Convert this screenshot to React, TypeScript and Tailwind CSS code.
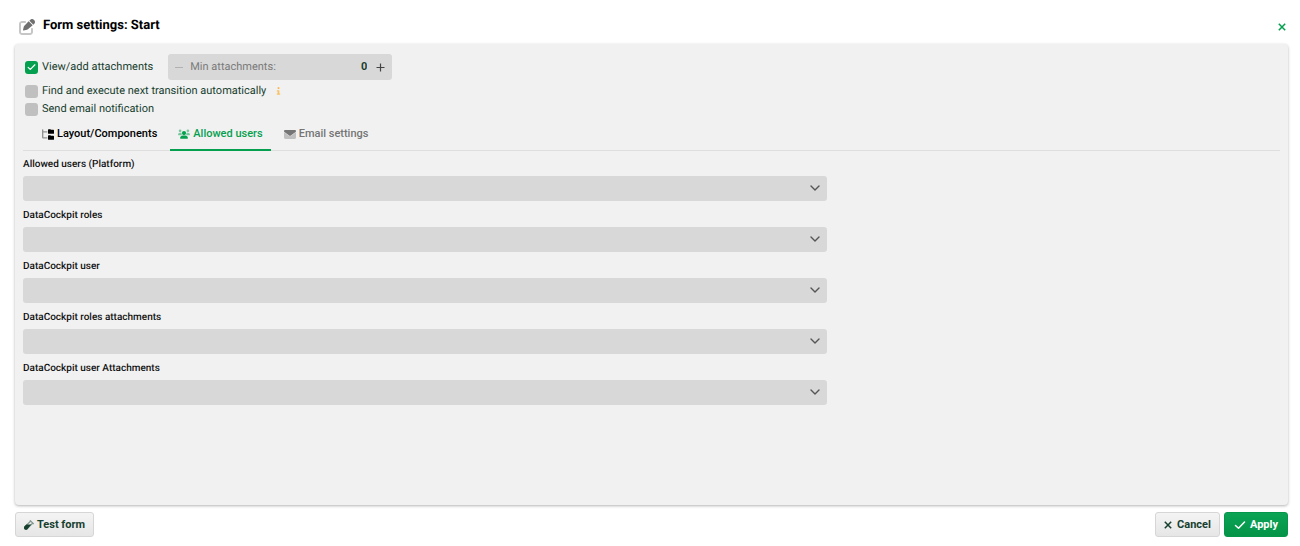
import React, { useState } from 'react';
import clsx from 'clsx';

type TabId = 'layout' | 'users' | 'email';

interface IconProps {
  className?: string;
}

function EditIcon({ className }: IconProps) {
  return (
    <svg viewBox="0 0 512 512" className={className} fill="currentColor" aria-hidden="true">
      <path
        opacity="0.4"
        d="M0 160v256c0 53 43 96 96 96h256c53 0 96-43 96-96v-96c0-18-14-32-32-32s-32 14-32 32v96c0 18-14 32-32 32H96c-18 0-32-14-32-32V160c0-18 14-32 32-32h96c18 0 32-14 32-32s-14-32-32-32H96C43 64 0 107 0 160z"
      />
      <path d="M472 22c-30-30-79-30-109 0l-31 31 127 127 31-31c30-30 30-79 0-109l-18-18zM309 75L172 212c-9 9-15 19-18 31l-26 107c-3 11 8 22 19 19l107-26c12-3 22-9 31-18l152-123L309 75z" />
    </svg>
  );
}

function TreeIcon({ className }: IconProps) {
  return (
    <svg viewBox="0 0 576 512" className={className} fill="currentColor" aria-hidden="true">
      <path
        opacity="0.4"
        d="M64 32C64 14 50 0 32 0S0 14 0 32v352c0 35 29 64 64 64h192v-64H64V160h192V96H64V32z"
      />
      <path d="M288 32v160c0 18 14 32 32 32h224c18 0 32-14 32-32V64c0-18-14-32-32-32h-99c-8 0-17-3-23-9L409 9c-6-6-14-9-22-9h-67c-18 0-32 14-32 32zM288 320v160c0 18 14 32 32 32h224c18 0 32-14 32-32V352c0-18-14-32-32-32h-99c-8 0-17-3-23-9l-13-14c-6-6-14-9-22-9h-67c-18 0-32 14-32 32z" />
    </svg>
  );
}

function UsersIcon({ className }: IconProps) {
  return (
    <svg viewBox="0 0 640 512" className={className} fill="currentColor" aria-hidden="true">
      <g opacity="0.5">
        <circle cx="112" cy="88" r="72" />
        <circle cx="528" cy="88" r="72" />
        <path d="M0 299c0-59 48-107 107-107h42c16 0 31 3 45 10-15 60 8 98 41 118H21c-12 0-21-9-21-21zM640 299c0-59-48-107-107-107h-42c-16 0-31 3-45 10 15 60-8 98-41 118h214c12 0 21-9 21-21z" />
      </g>
      <circle cx="320" cy="208" r="112" />
      <path d="M112 485c0-84 66-143 149-143h118c83 0 149 59 149 143 0 15-12 27-27 27H139c-15 0-27-12-27-27z" />
    </svg>
  );
}

function MailIcon({ className }: IconProps) {
  return (
    <svg viewBox="0 0 512 384" className={className} fill="currentColor" aria-hidden="true">
      <path
        opacity="0.4"
        d="M0 92v228c0 35 29 64 64 64h384c35 0 64-29 64-64V92L299 250c-25 19-61 19-86 0L0 92z"
      />
      <path d="M48 0C22 0 0 22 0 48c0 15 7 29 19 38l218 164c11 9 27 9 38 0L493 86c12-9 19-23 19-38 0-26-22-48-48-48H48z" />
    </svg>
  );
}

function VialIcon({ className }: IconProps) {
  return (
    <svg viewBox="0 0 512 512" className={className} fill="currentColor" aria-hidden="true">
      <path
        opacity="0.5"
        d="M343 7c-13-9-31-9-43 3s-12 33 0 45L30 325c-40 40-40 106 0 147s107 41 147 0l270-270 11 11c12 12 33 12 45 0s12-33 0-45L343 7zM345 100l57 57-245 270c-22 22-60 22-82 0s-22-60 0-82L345 100z"
      />
      <path d="M210 236h158L177 472c-40 41-106 41-147 0s-40-107 0-147l89-89h91z" />
    </svg>
  );
}

function CrossIcon({ className }: IconProps) {
  return (
    <svg viewBox="0 0 10 10" className={className} fill="none" stroke="currentColor" strokeWidth="1.9" aria-hidden="true">
      <path d="M1 1l8 8M9 1l-8 8" />
    </svg>
  );
}

function CheckIcon({ className }: IconProps) {
  return (
    <svg viewBox="0 0 12 10" className={className} fill="none" stroke="currentColor" strokeWidth="1.5" strokeLinecap="round" strokeLinejoin="round" aria-hidden="true">
      <path d="M1.5 5.5L4.5 8.3L10.5 2" />
    </svg>
  );
}

function InfoIcon({ className }: IconProps) {
  return (
    <svg viewBox="0 0 6 10" className={className} fill="currentColor" aria-hidden="true">
      <path d="M2 0.5h2v2H2z" />
      <path opacity="0.75" d="M1 4h3v4h1v1.5H1V8h1V5.500H1z" />
    </svg>
  );
}

interface CheckboxProps {
  id: string;
  label: string;
  checked: boolean;
  onChange: (checked: boolean) => void;
}

function Checkbox({ id, label, checked, onChange }: CheckboxProps) {
  return (
    <div className="flex items-center gap-1">
      <span className="relative flex">
        <input
          id={id}
          type="checkbox"
          checked={checked}
          onChange={(e) => onChange(e.target.checked)}
          className="h-[13px] w-[13px] appearance-none rounded-[3px] bg-[#c0c0c0] checked:bg-[#05a04f]"
        />
        {checked && <CheckIcon className="pointer-events-none absolute inset-0 m-auto h-2 w-[9px] text-white" />}
      </span>
      <label htmlFor={id} className="text-[11px] leading-[18px]">
        {label}
      </label>
    </div>
  );
}

const tabs = [
  { id: 'layout' as TabId, label: 'Layout/Components', Icon: TreeIcon, iconClass: 'h-[11px] w-3' },
  { id: 'users' as TabId, label: 'Allowed users', Icon: UsersIcon, iconClass: 'h-[10px] w-3' },
  { id: 'email' as TabId, label: 'Email settings', Icon: MailIcon, iconClass: 'h-[9px] w-3' },
];

const fields = [
  { id: 'platform-users', label: 'Allowed users (Platform)' },
  { id: 'dc-roles', label: 'DataCockpit roles' },
  { id: 'dc-user', label: 'DataCockpit user' },
  { id: 'dc-roles-attachments', label: 'DataCockpit roles attachments' },
  { id: 'dc-user-attachments', label: 'DataCockpit user Attachments' },
];

function SelectField({ id, label }: { id: string; label: string }) {
  return (
    <div className="flex flex-col gap-[3px]">
      <label htmlFor={id} className="text-[10px] leading-4 font-medium text-[#111]">
        {label}
      </label>
      <div className="relative flex">
        <select id={id} className="h-[25px] w-full appearance-none rounded-[3px] bg-[#d8d8d8] px-2 text-[11px]" />
        <svg
          viewBox="0 0 10 6"
          className="pointer-events-none absolute top-[9px] right-[7px] h-[6px] w-[10px] text-[#555]"
          fill="none"
          stroke="currentColor"
          strokeWidth="1.4"
          strokeLinecap="round"
          strokeLinejoin="round"
          aria-hidden="true"
        >
          <path d="M1 1l4 4 4-4" />
        </svg>
      </div>
    </div>
  );
}

export default function App() {
  const [attachments, setAttachments] = useState(true);
  const [autoTransition, setAutoTransition] = useState(false);
  const [notify, setNotify] = useState(false);
  const [minAttachments, setMinAttachments] = useState(0);
  const [activeTab, setActiveTab] = useState<TabId>('users');

  return (
    <div className="flex min-h-screen flex-col bg-white pr-3 pl-[15px] font-[Roboto,sans-serif] text-[#17402f] [text-rendering:geometricPrecision]">
      {/* Header */}
      <header className="flex h-[44px] items-center justify-between pt-[10px] pl-1">
        <div className="flex items-center gap-2">
          <EditIcon className="h-4 w-4 text-[#707070]" />
          <h1 className="pb-[2px] text-[13px] leading-5 font-bold text-black">Form settings: Start</h1>
        </div>
        <button type="button" aria-label="Close" className="p-[2px] text-[#05a04f]">
          <CrossIcon className="h-2 w-2" />
        </button>
      </header>

      {/* Settings panel */}
      <main className="flex-1 rounded-[4px] bg-[#f1f1f1] px-2 pt-[10px] pb-4 shadow-[0_1px_3px_rgba(0,0,0,0.3)]">
        <div className="pl-[2px]">
          <div className="flex items-center gap-[15px]">
            <Checkbox id="attachments" label="View/add attachments" checked={attachments} onChange={setAttachments} />
            <div className="flex h-[26px] w-56 items-center rounded-[3px] bg-[#d8d8d8] px-[7px]">
              <button
                type="button"
                aria-label="Decrease"
                disabled={minAttachments === 0}
                onClick={() => setMinAttachments(minAttachments - 1)}
                className="flex h-4 w-2 items-center disabled:opacity-40"
              >
                <span className="h-px w-full bg-[#777]" />
              </button>
              <label htmlFor="min-attachments" className="ml-[7px] text-[11px] text-[#7a7a7a]">
                Min attachments:
              </label>
              <input
                id="min-attachments"
                type="text"
                inputMode="numeric"
                value={minAttachments}
                onChange={(e) => setMinAttachments(Number(e.target.value) || 0)}
                className="min-w-0 flex-1 bg-transparent text-right text-[11px] font-bold outline-none"
              />
              <button
                type="button"
                aria-label="Increase"
                onClick={() => setMinAttachments(minAttachments + 1)}
                className="ml-[9px] text-[#444]"
              >
                <svg viewBox="0 0 9 9" className="h-[9px] w-[9px]" stroke="currentColor" strokeWidth="1.2" aria-hidden="true">
                  <path d="M4.500 0.500v8M0.500 4.500h8" />
                </svg>
              </button>
            </div>
          </div>
          <div className="mt-[2px] flex items-center gap-[10px]">
            <Checkbox
              id="auto-transition"
              label="Find and execute next transition automatically"
              checked={autoTransition}
              onChange={setAutoTransition}
            />
            <InfoIcon className="h-[10px] w-[5px] text-[#fbb034]" />
          </div>
          <Checkbox id="notify" label="Send email notification" checked={notify} onChange={setNotify} />
        </div>

        {/* Tabs */}
        <div role="tablist" className="flex gap-[5px] border-b border-[#dedede] pl-[11px]">
          {tabs.map(({ id, label, Icon, iconClass }) => (
            <button
              key={id}
              type="button"
              role="tab"
              aria-selected={activeTab === id}
              onClick={() => setActiveTab(id)}
              className={clsx(
                '-mb-px flex h-[33px] items-center gap-[3px] border-b-2 px-2 pt-px text-[11px] font-medium',
                activeTab === id ? 'border-[#05a04f] text-[#05a04f]' : 'border-transparent',
                id === 'layout' && activeTab !== id && 'text-black',
                id === 'email' && activeTab !== id && 'text-[#757575]'
              )}
            >
              <Icon className={iconClass} />
              {label}
            </button>
          ))}
        </div>

        <div className="flex w-[64%] flex-col gap-[7px] pt-[6px]">
          {fields.map((field) => (
            <SelectField key={field.id} {...field} />
          ))}
        </div>
      </main>

      {/* Footer */}
      <footer className="flex items-center justify-between pt-[7px] pb-[9px] text-[11px] font-bold">
        <button
          type="button"
          className="flex h-[25px] items-center gap-[3px] rounded-[3px] border border-[#d6d6d6] bg-linear-to-b from-[#f4f4f4] to-[#e6e6e6] px-2 pt-px"
        >
          <VialIcon className="h-[10px] w-[10px]" />
          Test form
        </button>
        <div className="flex gap-1">
          <button
            type="button"
            className="flex h-[25px] items-center gap-[5px] rounded-[3px] border border-[#d6d6d6] bg-linear-to-b from-[#f4f4f4] to-[#e6e6e6] px-2 pt-px"
          >
            <CrossIcon className="h-2 w-2" />
            Cancel
          </button>
          <button
            type="button"
            className="flex h-[25px] items-center gap-1 rounded-[3px] border border-[#05964a] bg-linear-to-b from-[#0ba355] to-[#049448] px-[9px] pt-px text-white"
          >
            <CheckIcon className="h-[10px] w-3" />
            Apply
          </button>
        </div>
      </footer>
    </div>
  );
}
